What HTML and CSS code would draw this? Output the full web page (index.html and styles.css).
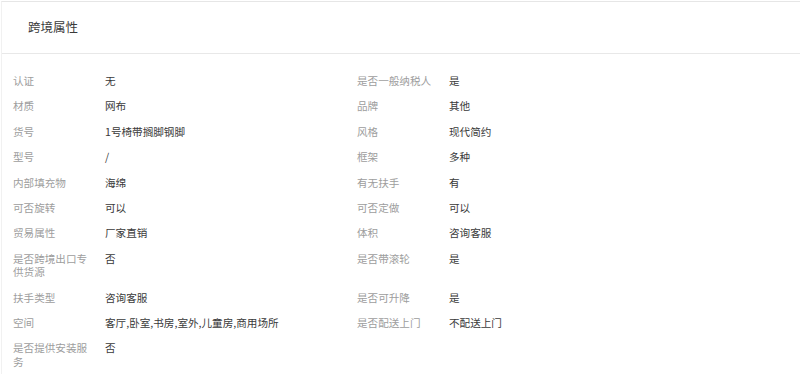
FILE: index.html
```html
<!DOCTYPE html>
<html lang="zh">
<head>
<meta charset="utf-8">
<title>跨境属性</title>
<link rel="stylesheet" href="styles.css">
</head>
<body>
<div class="panel">
  <div class="panel-head"><span class="panel-title">跨境属性</span></div>
  <div class="attrs">
    <div class="attr"><div class="label">认证</div><div class="value">无</div></div>
    <div class="attr"><div class="label">是否一般纳税人</div><div class="value">是</div></div>
    <div class="attr"><div class="label">材质</div><div class="value">网布</div></div>
    <div class="attr"><div class="label">品牌</div><div class="value">其他</div></div>
    <div class="attr"><div class="label">货号</div><div class="value">1号椅带搁脚钢脚</div></div>
    <div class="attr"><div class="label">风格</div><div class="value">现代简约</div></div>
    <div class="attr"><div class="label">型号</div><div class="value">/</div></div>
    <div class="attr"><div class="label">框架</div><div class="value">多种</div></div>
    <div class="attr"><div class="label">内部填充物</div><div class="value">海绵</div></div>
    <div class="attr"><div class="label">有无扶手</div><div class="value">有</div></div>
    <div class="attr"><div class="label">可否旋转</div><div class="value">可以</div></div>
    <div class="attr"><div class="label">可否定做</div><div class="value">可以</div></div>
    <div class="attr"><div class="label">贸易属性</div><div class="value">厂家直销</div></div>
    <div class="attr"><div class="label">体积</div><div class="value">咨询客服</div></div>
    <div class="attr"><div class="label">是否跨境出口专供货源</div><div class="value">否</div></div>
    <div class="attr"><div class="label">是否带滚轮</div><div class="value">是</div></div>
    <div class="attr"><div class="label">扶手类型</div><div class="value">咨询客服</div></div>
    <div class="attr"><div class="label">是否可升降</div><div class="value">是</div></div>
    <div class="attr"><div class="label">空间</div><div class="value">客厅,卧室,书房,室外,儿童房,商用场所</div></div>
    <div class="attr"><div class="label">是否配送上门</div><div class="value">不配送上门</div></div>
    <div class="attr"><div class="label">是否提供安装服务</div><div class="value">否</div></div>
  </div>
</div>
</body>
</html>
```
FILE: styles.css
```css
html, body {
  margin: 0;
  padding: 0;
  background: #fff;
}
body {
  font-family: "Noto Sans CJK SC", "Noto Sans", sans-serif;
  padding: 1px 0 0 1px;
}
.panel {
  border-top: 1px solid #e6e6e6;
  border-left: 1px solid #f1f1f1;
}
.panel-head {
  height: 51px;
  border-bottom: 1px solid #e8e8e8;
  display: flex;
  align-items: center;
  padding-left: 26px;
  padding-bottom: 2px;
  box-sizing: border-box;
  height: 52px;
}
.panel-title {
  font-size: 12.5px;
  color: #3a3a3a;
}
.attrs {
  display: grid;
  grid-template-columns: 344px 344px;
  padding: 14px 0 0 11px;
}
.attr {
  display: flex;
  align-items: flex-start;
  padding: 6px 0;
  font-size: 10.6px;
  line-height: 13.4px;
}
.label {
  width: 80px;
  margin-right: 12px;
  color: #9d9d9d;
  flex-shrink: 0;
}
.value {
  color: #3a3a3a;
}
```
